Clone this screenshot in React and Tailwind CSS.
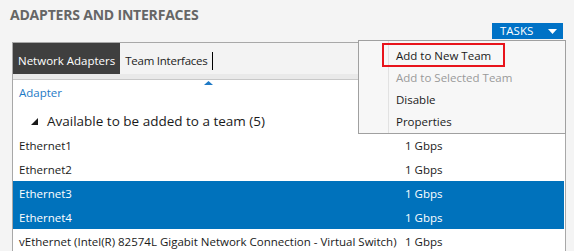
import React from "react";

const rows = [
  { name: "Ethernet1", speed: "1 Gbps", sel: false },
  { name: "Ethernet2", speed: "1 Gbps", sel: false },
  { name: "Ethernet3", speed: "1 Gbps", sel: true },
  { name: "Ethernet4", speed: "1 Gbps", sel: true },
  { name: "vEthernet (Intel(R) 82574L Gigabit Network Connection - Virtual Switch)", speed: "1 Gbps", sel: false },
];

export default function App() {
  return (
    <div
      className="relative w-[574px] h-[251px] overflow-hidden bg-[#f4f4f4] text-[#1a1a1a]"
      style={{ fontFamily: '"Open Sans", "Noto Sans", sans-serif' }}
    >
      <div className="flex items-start justify-between pl-[10px] pr-[11px] pt-[5px] h-[42px]">
        <div className="text-[14px] font-bold text-[#666666] leading-[20px] tracking-[-0.2px]">
          ADAPTERS AND INTERFACES
        </div>
        <div className="mt-[18px] w-[71px] h-[16px] bg-[#0072c6] flex items-center justify-between pl-[8px] pr-[6px] text-white text-[11.5px] leading-none">
          <span>TASKS</span>
          <svg width="9" height="5" viewBox="0 0 9 5"><path d="M0 0h9L4.5 5z" fill="#fff" /></svg>
        </div>
      </div>

      <div className="ml-[12px] w-[554px] border-l border-t border-r border-[#a8a8a8] bg-white">
        <div className="bg-[#f3f3f3]">
          <div className="flex items-stretch h-[31px]">
            <div className="bg-[#3f3f3f] text-white text-[11.5px] flex items-center pl-[5px] pr-[5px] pt-[4px]">
              Network Adapters
            </div>
            <div className="flex items-center pl-[5px] pt-[4px] text-[11.5px] tracking-[-0.25px] text-[#222]">
              Team Interfaces
              <span className="ml-[4px] w-[1px] h-[18px] bg-black"></span>
            </div>
          </div>
          <div className="h-[6px] bg-[#e9e9e9] border-b border-[#c8c8c8]"></div>
        </div>
        <div className="relative h-[25px] flex items-center pl-[6px] text-[11.5px] text-[#1e7ac6]">
          Adapter
          <svg className="absolute left-[191px] top-[1px]" width="9" height="4" viewBox="0 0 9 4"><path d="M0 4h9L4.5 0z" fill="#1e7ac6" /></svg>
        </div>
        <div className="h-[28px] flex items-center pl-[18px] pt-[4px] text-[13.5px] text-[#1a1a1a]">
          <svg width="7" height="7" viewBox="0 0 7 7" className="mr-[9px]"><path d="M7 0v7H0z" fill="#1a1a1a" /></svg>
          Available to be added to a team (5)
        </div>
        {rows.map((r) => (
          <div
            key={r.name}
            className={
              "h-[24px] flex items-center pt-[1px] text-[11.5px] mr-[1px] " +
              (r.sel ? "bg-[#0072bc] text-white" : "text-[#1a1a1a]")
            }
          >
            <div className="w-[392px] pl-[6px] whitespace-nowrap">{r.name}</div>
            <div>{r.speed}</div>
          </div>
        ))}
      </div>

      <div className="absolute left-[358px] top-[40px] w-[208px] h-[94px] bg-[#f7f7f7] border border-[#a0a0a0] flex">
        <div className="w-[30px] border-r border-[#e2e2e2]"></div>
        <div className="flex flex-col pt-[4px] pl-[7px] text-[11.5px]">
          <div className="h-[22px] flex items-center text-[#1a1a1a]">Add to New Team</div>
          <div className="h-[22px] flex items-center text-[#9a9a9a]">Add to Selected Team</div>
          <div className="h-[22px] flex items-center text-[#1a1a1a]">Disable</div>
          <div className="h-[21px] flex items-center text-[#1a1a1a]">Properties</div>
        </div>
      </div>
      <div className="absolute left-[382px] top-[43px] w-[123px] h-[24px] border-2 border-[#e8141b]"></div>
    </div>
  );
}
